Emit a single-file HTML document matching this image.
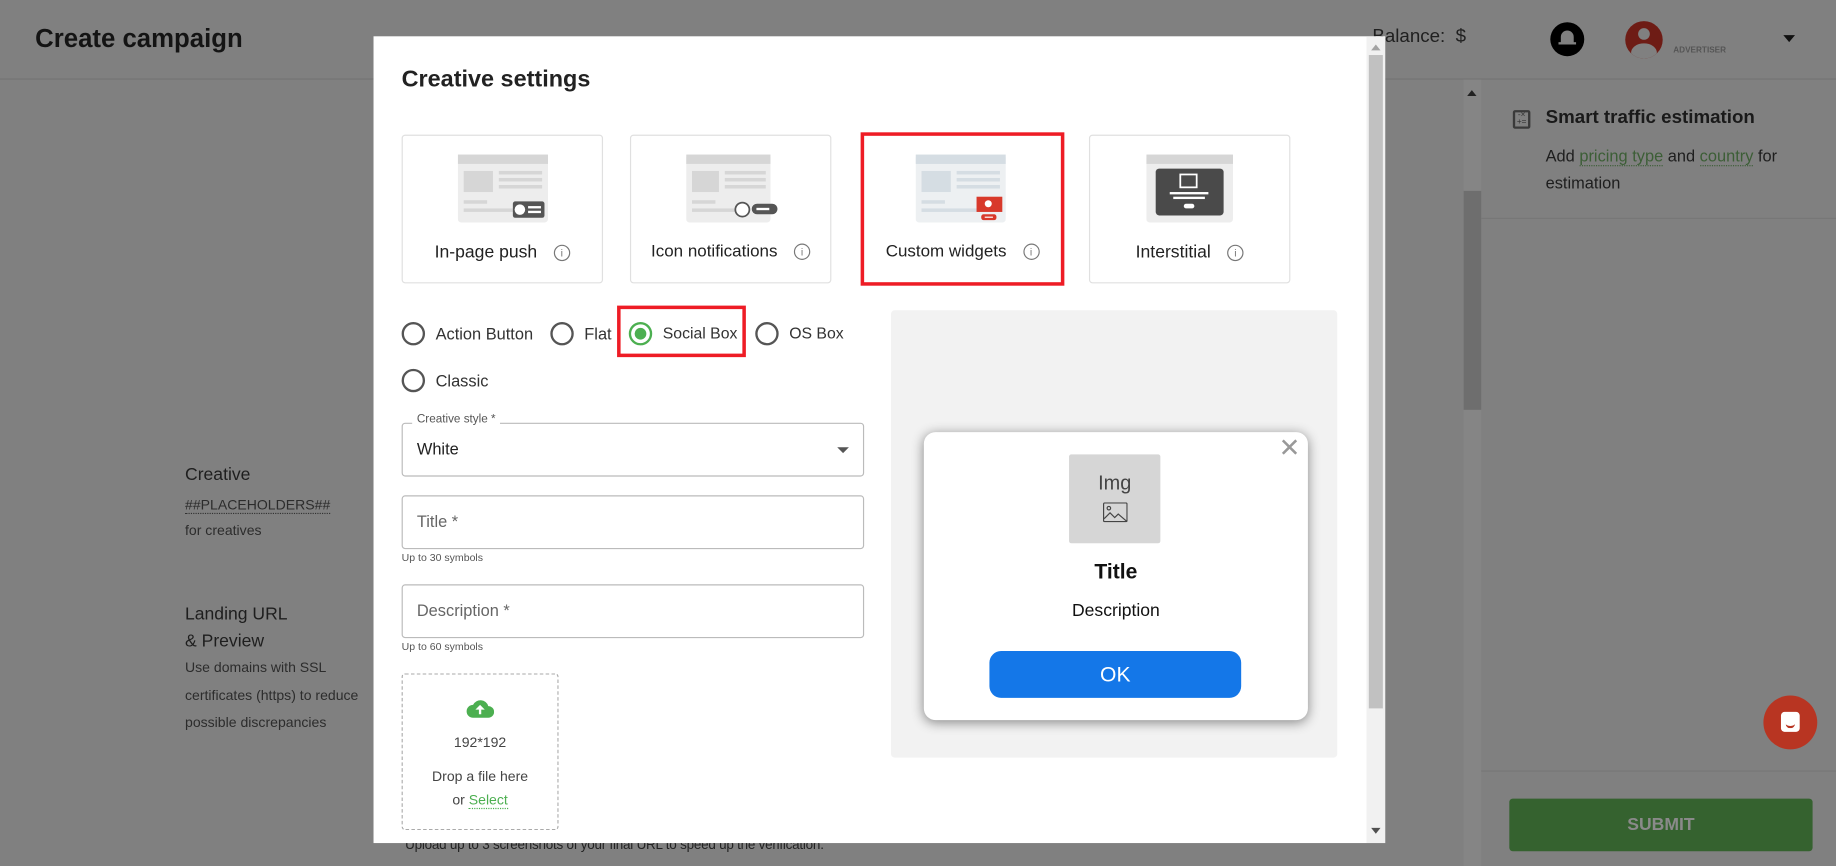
<!DOCTYPE html>
<html><head><meta charset="utf-8"><style>
html,body{margin:0;padding:0;width:1836px;height:866px;overflow:hidden;background:#808080;font-family:"Liberation Sans",Arial,sans-serif}
#w{position:absolute;left:0;top:0;width:1568px;height:740px;transform:scale(1.17092);transform-origin:0 0;background:#808080}
.a{position:absolute;white-space:nowrap}
.card{position:absolute;top:115px;width:170px;height:125px;border:1px solid #e0e0e0;border-radius:3px;background:#fff}
.card .lbl{position:absolute;top:91px;left:0;right:0;text-align:center;font-size:15px;color:#222}
.card svg{position:absolute;left:47px;top:16px}
.info{display:inline-block;width:12px;height:12px;border:1px solid #777;border-radius:50%;font-size:9px;line-height:12px;text-align:center;color:#777;margin-left:14px;vertical-align:1px}
.rad{position:absolute;width:16px;height:16px;border:2px solid #555;border-radius:50%}
.rl{position:absolute;font-size:14px;color:#333}
.inp{position:absolute;left:343px;width:393px;border:1px solid #bbb;border-radius:3px;height:44px}
.inp span{position:absolute;left:12px;top:13px;font-size:14px;color:#666}
.help{position:absolute;left:343px;font-size:9px;color:#555}
</style></head><body><div id="w">
<div class="a" style="left:0;top:0;width:1568px;height:67px;border-bottom:1px solid #747474"></div>
<div class="a" style="left:30px;top:20px;font-size:22px;font-weight:bold;color:#141414">Create campaign</div>
<div class="a" style="left:1172px;top:23px;font-size:16px;color:#202020">Balance:&nbsp; $</div>
<div class="a" style="left:1324px;top:19px;width:29px;height:29px;border-radius:50%;background:#000"><div style="position:absolute;left:9px;top:7px;width:11px;height:11px;background:#808080;border-radius:6px 6px 1px 1px"></div><div style="position:absolute;left:7px;top:17px;width:15px;height:2px;background:#808080"></div></div>
<div class="a" style="left:1388px;top:18px;width:32px;height:32px;border-radius:50%;background:#6e1c15;overflow:hidden"><div style="position:absolute;left:11px;top:6px;width:10px;height:10px;border-radius:50%;background:#808080"></div><div style="position:absolute;left:5px;top:19px;width:22px;height:16px;border-radius:50%;background:#808080"></div></div>
<div class="a" style="left:1429px;top:40px;font-size:7px;font-weight:bold;color:#555">ADVERTISER</div>
<div class="a" style="left:1523px;top:30px;width:0;height:0;border-left:5px solid transparent;border-right:5px solid transparent;border-top:6px solid #111"></div>
<div class="a" style="left:1250px;top:68px;width:15px;height:672px;background:#858585"></div>
<div class="a" style="left:1250px;top:163px;width:15px;height:187px;background:#6e6e6e"></div>
<div class="a" style="left:1253px;top:77px;border-left:4px solid transparent;border-right:4px solid transparent;border-bottom:5px solid #222"></div>
<div class="a" style="left:1265px;top:186px;width:303px;height:1px;background:#777"></div>
<div class="a" style="left:1265px;top:658px;width:303px;height:1px;background:#777"></div>
<div class="a" style="left:1292px;top:94px;width:15px;height:16px;border:2px solid #3a3a3a;border-radius:2px;box-sizing:border-box;font-size:7px;line-height:6px;color:#333;text-align:center">-×<br>+=</div>
<div class="a" style="left:1320px;top:92px;font-size:16px;font-weight:bold;color:#1a1a1a">Smart traffic estimation</div>
<div class="a" style="left:1320px;top:122px;font-size:14px;color:#1e1e1e;line-height:23px">Add <span style="color:#3c5e36;border-bottom:1px dotted #3c5e36">pricing type</span> and <span style="color:#3c5e36;border-bottom:1px dotted #3c5e36">country</span> for<br>estimation</div>
<div class="a" style="left:1289px;top:682px;width:259px;height:45px;background:#35622f;border-radius:3px;color:#8a8a8a;font-weight:bold;font-size:15px;text-align:center;line-height:45px">SUBMIT</div>
<div class="a" style="left:1506px;top:594px;width:46px;height:46px;border-radius:50%;background:#b83522"><div style="position:absolute;left:15px;top:14px;width:16px;height:17px;background:#fff;border-radius:3px"></div><div style="position:absolute;left:19px;top:23px;width:8px;height:3px;border-bottom:2px solid #b83522;border-radius:0 0 5px 5px"></div></div>
<div class="a" style="left:158px;top:397px;font-size:15px;color:#1e1e1e">Creative</div>
<div class="a" style="left:158px;top:424px;font-size:12px;color:#2c2c2c;border-bottom:1px dotted #333">##PLACEHOLDERS##</div>
<div class="a" style="left:158px;top:446px;font-size:12px;color:#2c2c2c">for creatives</div>
<div class="a" style="left:158px;top:513px;font-size:15px;color:#1e1e1e;line-height:23px">Landing URL<br>&amp; Preview</div>
<div class="a" style="left:158px;top:559px;font-size:12px;color:#2c2c2c;line-height:23.5px">Use domains with SSL<br>certificates (https) to reduce<br>possible discrepancies</div>
<div class="a" style="left:346px;top:716px;font-size:11.5px;color:#222;letter-spacing:-0.2px">Upload up to 3 screenshots of your final URL to speed up the verification.</div>
<div class="a" style="left:319px;top:31px;width:864px;height:689px;background:#fff;overflow:hidden">
 <div class="a" style="left:848px;top:0;width:16px;height:689px;background:#f1f1f1"></div>
 <div class="a" style="left:850px;top:16px;width:12px;height:558px;background:#c1c1c1"></div>
 <div class="a" style="left:852px;top:7px;border-left:4px solid transparent;border-right:4px solid transparent;border-bottom:5px solid #a3a3a3"></div>
 <div class="a" style="left:852px;top:676px;border-left:4px solid transparent;border-right:4px solid transparent;border-top:5px solid #505050"></div>
</div>
<div class="a" style="left:343px;top:57px;font-size:20px;font-weight:bold;color:#222">Creative settings</div>
<div class="card" style="left:343px"><svg width="77" height="58"><rect width="77" height="58" rx="3" fill="#ededed"/><rect width="77" height="8" fill="#d6d6d6"/><rect x="5" y="14" width="25" height="18" fill="#d6d6d6"/><rect x="35" y="14" width="37" height="3" fill="#d6d6d6"/><rect x="35" y="20" width="37" height="3" fill="#d6d6d6"/><rect x="35" y="26" width="37" height="3" fill="#d6d6d6"/><rect x="5" y="39" width="20" height="3" fill="#d6d6d6"/><rect x="5" y="46" width="50" height="3" fill="#d6d6d6"/><rect x="47" y="40" width="27" height="14" rx="2" fill="#555"/><circle cx="53" cy="47" r="4.5" fill="#fff"/><rect x="60" y="44" width="11" height="2" fill="#fff"/><rect x="60" y="48" width="11" height="2" fill="#fff"/></svg><div class="lbl">In-page push<span class="info">i</span></div></div>
<div class="card" style="left:538px"><svg width="80" height="58"><rect width="72" height="58" rx="3" fill="#ededed"/><rect width="72" height="8" fill="#d6d6d6"/><rect x="5" y="14" width="23" height="18" fill="#d6d6d6"/><rect x="33" y="14" width="35" height="3" fill="#d6d6d6"/><rect x="33" y="20" width="35" height="3" fill="#d6d6d6"/><rect x="33" y="26" width="35" height="3" fill="#d6d6d6"/><rect x="5" y="39" width="20" height="3" fill="#d6d6d6"/><rect x="5" y="46" width="40" height="3" fill="#d6d6d6"/><circle cx="48" cy="47" r="6" fill="#fff" stroke="#555" stroke-width="1.5"/><rect x="56" y="42" width="22" height="9" rx="4.5" fill="#555"/><rect x="60" y="45.5" width="11" height="2" fill="#fff"/></svg><div class="lbl" style="font-size:14.5px">Icon notifications<span class="info">i</span></div></div>
<div class="card" style="left:735px;top:113px;width:168px;height:125px;border:3px solid #ee1c25;border-radius:0"><svg width="77" height="58" style="left:44px;top:16px"><rect width="77" height="58" rx="3" fill="#edf0f2"/><rect width="77" height="8" fill="#d5dde3"/><rect x="5" y="14" width="25" height="18" fill="#d5dde3"/><rect x="35" y="14" width="37" height="3" fill="#d5dde3"/><rect x="35" y="20" width="37" height="3" fill="#d5dde3"/><rect x="35" y="26" width="37" height="3" fill="#d5dde3"/><rect x="5" y="39" width="20" height="3" fill="#d5dde3"/><rect x="5" y="46" width="55" height="3" fill="#d5dde3"/><rect x="52" y="36" width="22" height="13" fill="#d8392b"/><circle cx="62" cy="42" r="3" fill="#fff"/><rect x="56" y="51" width="13" height="5" rx="2" fill="#d8392b"/><rect x="59" y="53" width="7" height="1" fill="#fff"/></svg><div class="lbl" style="font-size:14.5px">Custom widgets<span class="info">i</span></div></div>
<div class="card" style="left:930px"><svg width="77" height="58" style="left:48px"><rect width="74" height="58" rx="3" fill="#ededed"/><rect width="74" height="8" fill="#d6d6d6"/><rect x="8" y="12" width="58" height="40" rx="3" fill="#4a4a4a"/><rect x="29" y="17" width="14" height="11" fill="none" stroke="#fff" stroke-width="1.5"/><rect x="20" y="32" width="33" height="2" fill="#fff"/><rect x="23" y="36" width="27" height="2" fill="#fff"/><rect x="32" y="42" width="9" height="4" rx="2" fill="#fff"/></svg><div class="lbl">Interstitial<span class="info">i</span></div></div>
<div class="rad" style="left:343px;top:275px"></div><div class="rl" style="left:372px;top:277px">Action Button</div>
<div class="rad" style="left:470px;top:275px"></div><div class="rl" style="left:499px;top:277px">Flat</div>
<div class="rad" style="left:537px;top:275px;border-color:#4caf50"><div style="position:absolute;left:3px;top:3px;width:10px;height:10px;border-radius:50%;background:#4caf50"></div></div><div class="rl" style="left:566px;top:277px;font-size:13.5px">Social Box</div>
<div class="a" style="left:527px;top:261px;width:104px;height:38px;border:3px solid #ee1c25"></div>
<div class="rad" style="left:645px;top:275px"></div><div class="rl" style="left:674px;top:277px;font-size:13.5px">OS Box</div>
<div class="rad" style="left:343px;top:315px"></div><div class="rl" style="left:372px;top:317px">Classic</div>
<div class="inp" style="top:361px"><span style="color:#222">White</span><div style="position:absolute;right:12px;top:20px;border-left:5px solid transparent;border-right:5px solid transparent;border-top:5px solid #555"></div></div>
<div class="a" style="left:352px;top:353px;background:#fff;padding:0 4px;font-size:10px;color:#555">Creative style *</div>
<div class="inp" style="top:423px"><span>Title *</span></div>
<div class="help" style="top:471px">Up to 30 symbols</div>
<div class="inp" style="top:499px"><span>Description *</span></div>
<div class="help" style="top:547px">Up to 60 symbols</div>
<div class="a" style="left:343px;top:575px;width:132px;height:132px;border:1px dashed #aaa;border-radius:3px"></div>
<svg class="a" style="left:398px;top:596px" width="24" height="18" viewBox="0 0 24 18"><path d="M6 17h13a5 5 0 0 0 0-10 7 7 0 0 0-13-1 5.5 5.5 0 0 0 0 11z" fill="#4caf50"/><path d="M12 6l-4 4h3v4h2v-4h3z" fill="#fff"/></svg>
<div class="a" style="left:343px;top:627px;width:134px;text-align:center;font-size:12px;color:#444">192*192</div>
<div class="a" style="left:343px;top:653px;width:134px;text-align:center;font-size:12px;color:#444;line-height:20px">Drop a file here<br>or <span style="color:#4caf50;border-bottom:1px dotted #4caf50">Select</span></div>
<div class="a" style="left:761px;top:265px;width:381px;height:382px;background:#f2f2f2;border-radius:3px"></div>
<div class="a" style="left:789px;top:369px;width:328px;height:246px;background:#fff;border-radius:10px;box-shadow:0 2px 10px rgba(0,0,0,.45)"></div>
<div class="a" style="left:1092px;top:370px;font-size:22px;color:#999">✕</div>
<div class="a" style="left:913px;top:388px;width:78px;height:76px;background:#d6d6d6;border-radius:2px"></div>
<div class="a" style="left:913px;top:403px;width:78px;text-align:center;font-size:17px;color:#444">Img</div>
<svg class="a" style="left:942px;top:429px" width="21" height="17"><rect x="0.5" y="0.5" width="20" height="16" rx="1" fill="none" stroke="#444"/><circle cx="5" cy="5" r="1.5" fill="none" stroke="#444"/><path d="M1 14l5-5 4 4 3-3 7 6" fill="none" stroke="#444"/></svg>
<div class="a" style="left:789px;top:478px;width:328px;text-align:center;font-size:18px;font-weight:bold;color:#111">Title</div>
<div class="a" style="left:789px;top:513px;width:328px;text-align:center;font-size:15px;color:#111">Description</div>
<div class="a" style="left:845px;top:556px;width:215px;height:40px;border-radius:10px;background:#1477e8;color:#fff;font-size:18px;text-align:center;line-height:40px">OK</div>
</div></body></html>
